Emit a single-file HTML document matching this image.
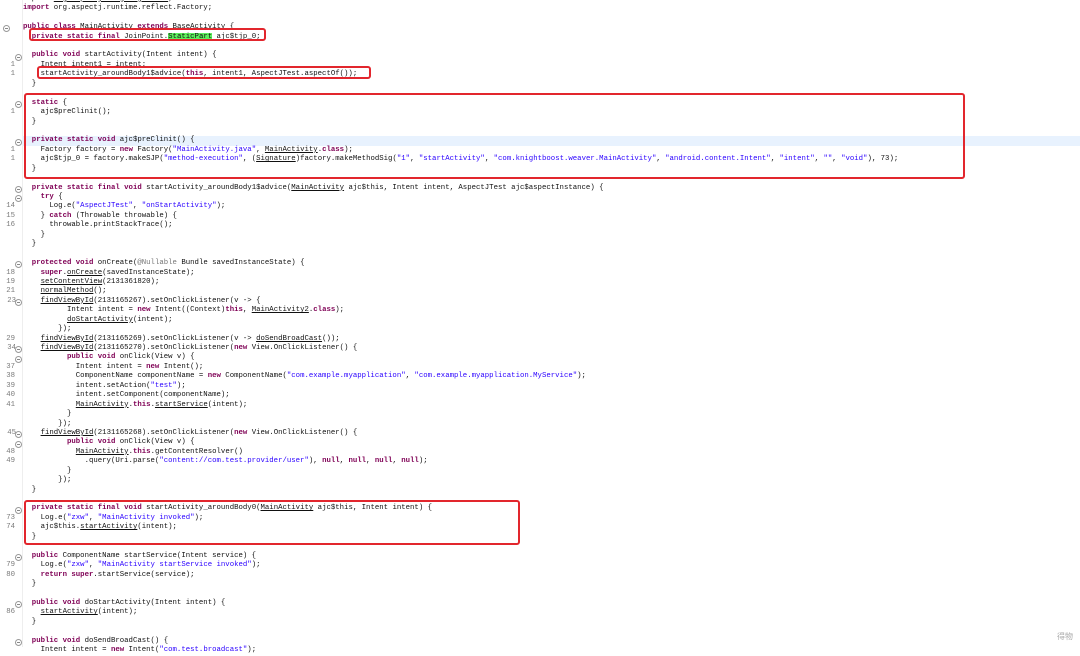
<!DOCTYPE html>
<html><head><meta charset="utf-8"><style>
html,body{margin:0;padding:0;background:#fff;}
body{width:1080px;height:647px;overflow:hidden;position:relative;font-family:"Liberation Mono",monospace;font-size:7.33px;color:#111;}
#c{position:absolute;left:0;top:-5.15px;width:1080px;}
.l{position:relative;height:9.45px;line-height:9.45px;white-space:pre;}
.l code{position:absolute;left:23px;top:0;font-family:inherit;font-size:inherit;}
.n{position:absolute;right:1065px;top:0;color:#7a7a7a;}
.f{position:absolute;left:15px;top:2.2px;width:5px;height:5px;border:0.8px solid #999;border-radius:50%;background:#fff;}
.f:after{content:"";position:absolute;left:1px;top:2.1px;width:3px;height:0.9px;background:#888;}
.hl:before{content:"";position:absolute;left:22px;right:0;top:0;bottom:0;background:#e8f2fe;}
.k{color:#7f0055;font-weight:bold;}
.s{color:#2a00ff;}
.u{text-decoration:underline;}
.a{color:#777;}
.g{background:#5df05d;}
.box{position:absolute;border:2px solid #e2262d;border-radius:3px;box-sizing:border-box;}
#gl{position:absolute;left:22px;top:0;width:1px;height:647px;background:#eee;}
#wm{position:absolute;left:1057px;top:631px;font-family:"Liberation Sans","Noto Sans CJK SC",sans-serif;font-size:8px;color:#aaa;}
</style></head><body>
<div id="gl"></div>
<div id="c">
<div class="l"><code>import <span class="u">org.aspectj.lang.Signature</span>;</code></div>
<div class="l"><code><span class="k">import</span> org.aspectj.runtime.reflect.Factory;</code></div>
<div class="l"></div>
<div class="l"><span class="f" style="left:3px"></span><code><span class="k">public class</span> MainActivity <span class="k">extends</span> BaseActivity {</code></div>
<div class="l"><code>  <span class="k">private static final</span> <span class="u">JoinPoint</span>.<span class="g">StaticPart</span> ajc$tjp_0;</code></div>
<div class="l"></div>
<div class="l"><span class="f"></span><code>  <span class="k">public void</span> startActivity(Intent intent) {</code></div>
<div class="l"><span class="n">1</span><code>    Intent intent1 = intent;</code></div>
<div class="l"><span class="n">1</span><code>    startActivity_aroundBody1$advice(<span class="k">this</span>, intent1, AspectJTest.aspectOf());</code></div>
<div class="l"><code>  }</code></div>
<div class="l"></div>
<div class="l"><span class="f"></span><code>  <span class="k">static</span> {</code></div>
<div class="l"><span class="n">1</span><code>    ajc$preClinit();</code></div>
<div class="l"><code>  }</code></div>
<div class="l"></div>
<div class="l hl"><span class="f"></span><code>  <span class="k">private static void</span> ajc$preClinit() {</code></div>
<div class="l"><span class="n">1</span><code>    Factory factory = <span class="k">new</span> Factory(<span class="s">"MainActivity.java"</span>, <span class="u">MainActivity</span>.<span class="k">class</span>);</code></div>
<div class="l"><span class="n">1</span><code>    ajc$tjp_0 = factory.makeSJP(<span class="s">"method-execution"</span>, (<span class="u">Signature</span>)factory.makeMethodSig(<span class="s">"1"</span>, <span class="s">"startActivity"</span>, <span class="s">"com.knightboost.weaver.MainActivity"</span>, <span class="s">"android.content.Intent"</span>, <span class="s">"intent"</span>, <span class="s">""</span>, <span class="s">"void"</span>), 73);</code></div>
<div class="l"><code>  }</code></div>
<div class="l"></div>
<div class="l"><span class="f"></span><code>  <span class="k">private static final void</span> startActivity_aroundBody1$advice(<span class="u">MainActivity</span> ajc$this, Intent intent, AspectJTest ajc$aspectInstance) {</code></div>
<div class="l"><span class="f"></span><code>    <span class="k">try</span> {</code></div>
<div class="l"><span class="n">14</span><code>      Log.e(<span class="s">"AspectJTest"</span>, <span class="s">"onStartActivity"</span>);</code></div>
<div class="l"><span class="n">15</span><code>    } <span class="k">catch</span> (Throwable throwable) {</code></div>
<div class="l"><span class="n">16</span><code>      throwable.printStackTrace();</code></div>
<div class="l"><code>    }</code></div>
<div class="l"><code>  }</code></div>
<div class="l"></div>
<div class="l"><span class="f"></span><code>  <span class="k">protected void</span> onCreate(<span class="a">@Nullable</span> Bundle savedInstanceState) {</code></div>
<div class="l"><span class="n">18</span><code>    <span class="k">super</span>.<span class="u">onCreate</span>(savedInstanceState);</code></div>
<div class="l"><span class="n">19</span><code>    <span class="u">setContentView</span>(2131361820);</code></div>
<div class="l"><span class="n">21</span><code>    <span class="u">normalMethod</span>();</code></div>
<div class="l"><span class="n" style="right:1064px">23</span><span class="f"></span><code>    <span class="u">findViewById</span>(2131165267).setOnClickListener(v -&gt; {</code></div>
<div class="l"><code>          Intent intent = <span class="k">new</span> Intent((Context)<span class="k">this</span>, <span class="u">MainActivity2</span>.<span class="k">class</span>);</code></div>
<div class="l"><code>          <span class="u">doStartActivity</span>(intent);</code></div>
<div class="l"><code>        });</code></div>
<div class="l"><span class="n">29</span><code>    <span class="u">findViewById</span>(2131165269).setOnClickListener(v -&gt; <span class="u">doSendBroadCast</span>());</code></div>
<div class="l"><span class="n" style="right:1064px">34</span><span class="f"></span><code>    <span class="u">findViewById</span>(2131165270).setOnClickListener(<span class="k">new</span> View.OnClickListener() {</code></div>
<div class="l"><span class="f"></span><code>          <span class="k">public void</span> onClick(View v) {</code></div>
<div class="l"><span class="n">37</span><code>            Intent intent = <span class="k">new</span> Intent();</code></div>
<div class="l"><span class="n">38</span><code>            ComponentName componentName = <span class="k">new</span> ComponentName(<span class="s">"com.example.myapplication"</span>, <span class="s">"com.example.myapplication.MyService"</span>);</code></div>
<div class="l"><span class="n">39</span><code>            intent.setAction(<span class="s">"test"</span>);</code></div>
<div class="l"><span class="n">40</span><code>            intent.setComponent(componentName);</code></div>
<div class="l"><span class="n">41</span><code>            <span class="u">MainActivity</span>.<span class="k">this</span>.<span class="u">startService</span>(intent);</code></div>
<div class="l"><code>          }</code></div>
<div class="l"><code>        });</code></div>
<div class="l"><span class="n" style="right:1064px">45</span><span class="f"></span><code>    <span class="u">findViewById</span>(2131165268).setOnClickListener(<span class="k">new</span> View.OnClickListener() {</code></div>
<div class="l"><span class="f"></span><code>          <span class="k">public void</span> onClick(View v) {</code></div>
<div class="l"><span class="n">48</span><code>            <span class="u">MainActivity</span>.<span class="k">this</span>.getContentResolver()</code></div>
<div class="l"><span class="n">49</span><code>              .query(Uri.parse(<span class="s">"content://com.test.provider/user"</span>), <span class="k">null</span>, <span class="k">null</span>, <span class="k">null</span>, <span class="k">null</span>);</code></div>
<div class="l"><code>          }</code></div>
<div class="l"><code>        });</code></div>
<div class="l"><code>  }</code></div>
<div class="l"></div>
<div class="l"><span class="f"></span><code>  <span class="k">private static final void</span> startActivity_aroundBody0(<span class="u">MainActivity</span> ajc$this, Intent intent) {</code></div>
<div class="l"><span class="n">73</span><code>    Log.e(<span class="s">"zxw"</span>, <span class="s">"MainActivity invoked"</span>);</code></div>
<div class="l"><span class="n">74</span><code>    ajc$this.<span class="u">startActivity</span>(intent);</code></div>
<div class="l"><code>  }</code></div>
<div class="l"></div>
<div class="l"><span class="f"></span><code>  <span class="k">public</span> ComponentName startService(Intent service) {</code></div>
<div class="l"><span class="n">79</span><code>    Log.e(<span class="s">"zxw"</span>, <span class="s">"MainActivity startService invoked"</span>);</code></div>
<div class="l"><span class="n">80</span><code>    <span class="k">return super</span>.startService(service);</code></div>
<div class="l"><code>  }</code></div>
<div class="l"></div>
<div class="l"><span class="f"></span><code>  <span class="k">public void</span> doStartActivity(Intent intent) {</code></div>
<div class="l"><span class="n">86</span><code>    <span class="u">startActivity</span>(intent);</code></div>
<div class="l"><code>  }</code></div>
<div class="l"></div>
<div class="l"><span class="f"></span><code>  <span class="k">public void</span> doSendBroadCast() {</code></div>
<div class="l"><code>    Intent intent = <span class="k">new</span> Intent(<span class="s">"com.test.broadcast"</span>);</code></div>
</div>
<div class="box" style="left:29px;top:28px;width:237px;height:13px"></div>
<div class="box" style="left:37px;top:66px;width:334px;height:13px"></div>
<div class="box" style="left:24px;top:93px;width:941px;height:86px"></div>
<div class="box" style="left:24px;top:500px;width:496px;height:45px"></div>
<div id="wm">得物</div>
</body></html>
